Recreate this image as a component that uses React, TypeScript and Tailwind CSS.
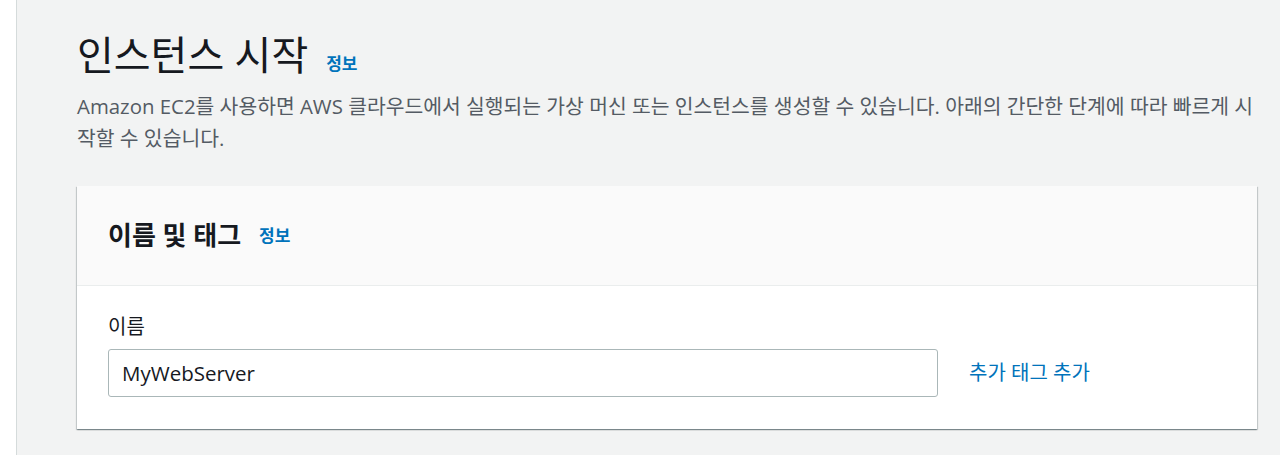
export default function App() {
  const font = { fontFamily: '"Open Sans", "Noto Sans CJK KR", sans-serif' };

  return (
    <div className="flex min-h-[455px] w-[1280px] bg-[#f2f3f3]" style={font}>
      {/* Side nav edge */}
      <div className="w-[17px] shrink-0 border-r border-[#d5dbdb] bg-white" />

      <main className="flex-1 pl-[60px] pr-[23px] pt-[29px]">
        {/* Page header */}
        <div className="flex items-baseline gap-[18px]">
          <h1 className="text-[40px] leading-[52px] font-normal text-[#16191f]">인스턴스 시작</h1>
          <a className="text-[17px] font-bold text-[#0073bb]">정보</a>
        </div>
        <p className="mt-[9px] text-[20.4px] leading-[32px] text-[#545b64]">
          Amazon EC2를 사용하면 AWS 클라우드에서 실행되는 가상 머신 또는 인스턴스를 생성할 수 있습니다. 아래의 간단한 단계에 따라 빠르게 시작할 수 있습니다.
        </p>

        {/* Name and tags card */}
        <section className="mt-[32px] bg-white shadow-[0_1px_1px_0_rgba(0,28,36,0.3),1px_1px_1px_0_rgba(0,28,36,0.15),-1px_1px_1px_0_rgba(0,28,36,0.15)]">
          <div className="flex h-[100px] items-center gap-[18px] border-b border-[#eaeded] bg-[#fafafa] px-[31px]">
            <h2 className="text-[26px] font-bold text-[#16191f]">이름 및 태그</h2>
            <a className="text-[17px] font-bold text-[#0073bb]">정보</a>
          </div>
          <div className="px-[31px] pt-[27px] pb-[32px]">
            <label className="block text-[20px] leading-[28px] text-[#16191f]">이름</label>
            <div className="mt-[8px] flex items-center gap-[31px]">
              <div className="flex h-[48px] w-[830px] items-center rounded-[3px] border border-[#aab7b8] bg-white px-[13px]">
                <span className="text-[20.5px] text-[#16191f]">MyWebServer</span>
              </div>
              <a className="text-[20px] text-[#0073bb]">추가 태그 추가</a>
            </div>
          </div>
        </section>
      </main>
    </div>
  );
}
